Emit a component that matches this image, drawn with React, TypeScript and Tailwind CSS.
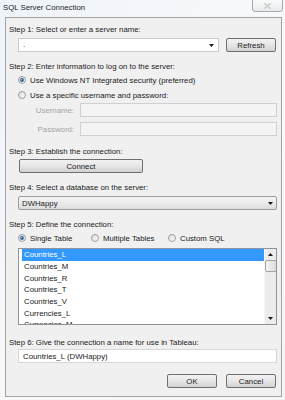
import React from 'react';

const btn =
  'flex items-center justify-center rounded-[2px] border border-[#707070] bg-linear-to-b from-[#f2f2f2] via-[#e6e6e6] to-[#d2d2d2] text-[#1a1a1a]';

function Radio({ checked }: { checked?: boolean }) {
  return (
    <svg width="8" height="8" viewBox="0 0 8 8" className="shrink-0">
      <defs>
        <linearGradient id={checked ? 'rg-on' : 'rg-off'} x1="0" y1="0" x2="1" y2="1">
          <stop offset="0" stopColor="#dcdcdc" />
          <stop offset="1" stopColor="#fbfbfb" />
        </linearGradient>
      </defs>
      <circle cx="4" cy="4" r="3.5" fill={`url(#${checked ? 'rg-on' : 'rg-off'})`} stroke="#8a8a8a" strokeWidth="0.8" />
      {checked && <circle cx="4" cy="4" r="1.9" fill="#2c5f94" />}
      {checked && <circle cx="3.6" cy="3.6" r="0.8" fill="#7fb2e0" />}
    </svg>
  );
}

function Arrow({ up }: { up?: boolean }) {
  return (
    <svg width="5" height="3" viewBox="0 0 5 3">
      <path d={up ? 'M0 3 L2.5 0 L5 3 Z' : 'M0 0 L5 0 L2.5 3 Z'} fill="#1a1a1a" />
    </svg>
  );
}

const tables = [
  'Countries_L',
  'Countries_M',
  'Countries_R',
  'Countries_T',
  'Countries_V',
  'Currencies_L',
  'Currencies_M',
];

export default function App() {
  return (
    <div className="relative w-[285px] h-[400px] overflow-hidden bg-linear-to-br from-[#eef3f9] via-[#f8f9fb] to-[#f4f5f7] font-['Liberation_Sans',Arial,sans-serif] text-[7.8px] leading-[9px] text-[#1a1a1a]">
      {/* Title bar */}
      <div className="h-[17px] pl-[3px] pt-[3px] text-[#1e1e1e]">SQL Server Connection</div>
      <div className="absolute left-[252px] top-[-2px] w-[31px] h-[14px] rounded-b-[3px] border border-[#a7a9ad] bg-linear-to-b from-[#fbfbfb] to-[#e9ebee] flex items-center justify-center pt-[1px]">
        <svg width="7" height="6" viewBox="0 0 7 6">
          <path d="M0.5 0.5 L6.5 5.5 M6.5 0.5 L0.5 5.5" stroke="#b5b5b5" strokeWidth="1.4" />
          <path d="M0.5 0.5 L6.5 5.5 M6.5 0.5 L0.5 5.5" stroke="#f4f4f4" strokeWidth="0.5" />
        </svg>
      </div>

      {/* Dialog body */}
      <div className="ml-[5px] w-[277px] h-[380px] border border-[#a4a4a4] bg-[#f0f0f0] flex flex-col pl-[3px]">
        <div className="mt-[7px] h-[9px]">Step 1: Select or enter a server name:</div>
        <div className="mt-[4px] h-[14px] flex ml-[9px]">
          <div className="w-[201px] h-[14px] border border-[#c9cbd0] bg-white flex items-center justify-between pl-[4px] pr-[4px]">
            <span className="leading-none">.</span>
            <Arrow />
          </div>
          <div className={`${btn} ml-[7px] w-[50px] h-[14px]`}>Refresh</div>
        </div>

        <div className="mt-[10px] h-[9px]">Step 2: Enter information to log on to the server:</div>
        <div className="mt-[4px] h-[10px] flex items-center gap-[4px] ml-[9px]">
          <Radio checked />
          <span>Use Windows NT Integrated security (preferred)</span>
        </div>
        <div className="mt-[5px] h-[10px] flex items-center gap-[4px] ml-[9px]">
          <Radio />
          <span>Use a specific username and password:</span>
        </div>
        <div className="mt-[3px] h-[14px] flex items-center">
          <div className="w-[65px] text-right text-[#a3a3a3]">Username:</div>
          <div className="ml-[6px] w-[197px] h-[14px] border border-[#cfd0d3] bg-[#f4f4f4]" />
        </div>
        <div className="mt-[5px] h-[14px] flex items-center">
          <div className="w-[65px] text-right text-[#a3a3a3]">Password:</div>
          <div className="ml-[6px] w-[197px] h-[14px] border border-[#cfd0d3] bg-[#f4f4f4]" />
        </div>

        <div className="mt-[11px] h-[9px]">Step 3: Establish the connection:</div>
        <div className={`${btn} mt-[3px] ml-[10px] w-[124px] h-[14px]`}>Connect</div>

        <div className="mt-[10px] h-[9px]">Step 4: Select a database on the server:</div>
        <div className="mt-[4px] ml-[9px] w-[259px] h-[14px] border border-[#9c9c9c] rounded-[2px] bg-linear-to-b from-[#f4f4f4] via-[#ebebeb] to-[#dcdcdc] flex items-center justify-between pl-[3px] pr-[3px]">
          <span>DWHappy</span>
          <Arrow />
        </div>

        <div className="mt-[10px] h-[9px]">Step 5: Define the connection:</div>
        <div className="mt-[4px] h-[10px] flex items-center ml-[9px]">
          <div className="w-[73px] flex items-center gap-[4px]">
            <Radio checked />
            <span>Single Table</span>
          </div>
          <div className="w-[77px] flex items-center gap-[4px]">
            <Radio />
            <span>Multiple Tables</span>
          </div>
          <div className="flex items-center gap-[4px]">
            <Radio />
            <span>Custom SQL</span>
          </div>
        </div>

        <div className="mt-[5px] ml-[9px] w-[259px] h-[77px] border border-[#8f949b] bg-white flex overflow-hidden">
          <div className="flex-1 pl-[3px] overflow-hidden">
            {tables.map((t, i) => (
              <div
                key={t}
                className={`h-[11.7px] pl-[2px] flex items-center ${i === 0 ? 'bg-[#3399ff] text-white' : ''}`}
              >
                {t}
              </div>
            ))}
          </div>
          <div className="w-[12px] bg-[#ececec] border-l border-[#f6f6f6] flex flex-col items-center">
            <div className="h-[11px] flex items-center justify-center">
              <Arrow up />
            </div>
            <div className="w-[12px] h-[12px] rounded-[2px] border border-[#a3a3a3] bg-linear-to-r from-[#f4f4f4] to-[#dcdcdc]" />
            <div className="flex-1" />
            <div className="h-[11px] flex items-center justify-center">
              <Arrow />
            </div>
          </div>
        </div>

        <div className="mt-[13px] h-[9px]">Step 6: Give the connection a name for use in Tableau:</div>
        <div className="mt-[2px] ml-[9px] w-[259px] h-[14px] border border-[#d5d7db] bg-white flex items-center pl-[4px]">
          Countries_L (DWHappy)
        </div>

        <div className="mt-[11px] h-[14px] flex justify-end pr-[5px]">
          <div className={`${btn} w-[50px] h-[14px]`}>OK</div>
          <div className={`${btn} ml-[9px] w-[50px] h-[14px]`}>Cancel</div>
        </div>
      </div>
    </div>
  );
}
